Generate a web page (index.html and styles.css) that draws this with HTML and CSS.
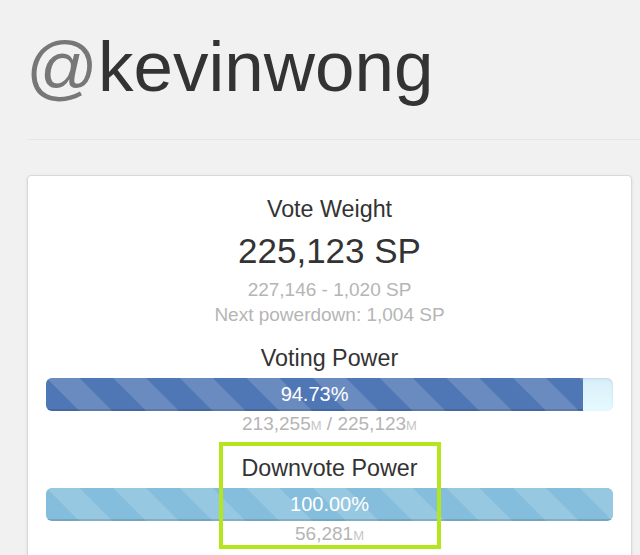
FILE: index.html
```html
<!DOCTYPE html>
<html lang="en">
<head>
<meta charset="utf-8">
<title>@kevinwong</title>
<link rel="stylesheet" href="styles.css">
</head>
<body>
<div class="page">
  <header class="page-header">
    <h1><span class="at">@</span>kevinwong</h1>
  </header>
  <section class="card">
    <div class="stat">
      <h2 class="stat-title">Vote Weight</h2>
      <div class="stat-value">225,123 SP</div>
      <div class="stat-note first">227,146 - 1,020 SP</div>
      <div class="stat-note">Next powerdown: 1,004 SP</div>
    </div>
    <div class="meter meter-voting">
      <h2 class="stat-title">Voting Power</h2>
      <div class="progress">
        <div class="progress-bar bar-voting" style="width:94.73%">94.73%</div>
      </div>
      <div class="stat-note">213,255<small>M</small> / 225,123<small>M</small></div>
    </div>
    <div class="meter meter-down">
      <h2 class="stat-title">Downvote Power</h2>
      <div class="progress">
        <div class="progress-bar bar-down" style="width:100%">100.00%</div>
      </div>
      <div class="stat-note">56,281<small>M</small></div>
    </div>
  </section>
</div>
<div class="highlight"></div>
</body>
</html>
```

FILE: styles.css
```css
html, body {
  margin: 0;
  padding: 0;
}

body {
  position: relative;
  background: #f1f1f1;
  font-family: "Liberation Sans", Arial, sans-serif;
  color: #333;
  overflow: hidden;
}

.page {
  padding-left: 27px;
}

.page-header {
  padding-top: 27px;
  padding-bottom: 33px;
  border-bottom: 1px solid #e6e6e6;
  margin-bottom: 35px;
}

.page-header h1 {
  margin: 0 0 0 -1px;
  font-size: 71px;
  line-height: 79px;
  font-weight: normal;
  color: #333;
  white-space: nowrap;
}

.page-header .at {
  color: #777;
}

.card {
  margin-right: 8px;
  background: #fff;
  border: 1px solid #d9d9d9;
  border-radius: 4px;
  box-shadow: 0 1px 3px rgba(0, 0, 0, 0.1);
  padding: 17px 18px 20px;
  text-align: center;
}

.stat-title {
  margin: 0;
  font-size: 23.3px;
  line-height: 33px;
  font-weight: normal;
  color: #333;
}

.stat-value {
  margin-top: 6px;
  font-size: 35px;
  line-height: 38px;
  color: #333;
}

.stat-note {
  font-size: 19px;
  line-height: 25px;
  color: #b5b5b5;
}

.stat-note.first {
  margin-top: 7px;
}

.stat-note small {
  font-size: 13px;
  color: #c6c6c6;
}

.meter-voting {
  margin-top: 15px;
}

.meter-down {
  margin-top: 14px;
}

.progress {
  margin-top: 3px;
  height: 33px;
  border-radius: 6px;
  overflow: hidden;
  background: linear-gradient(#d8eef9, #e6fbff);
  box-shadow: inset 0 1px 3px rgba(0, 0, 0, 0.1);
}

.progress-bar {
  height: 100%;
  color: #fff;
  font-size: 20px;
  line-height: 33px;
  text-align: center;
  white-space: nowrap;
  background-image: linear-gradient(45deg,
    rgba(255, 255, 255, 0.15) 25%, transparent 25%,
    transparent 50%, rgba(255, 255, 255, 0.15) 50%,
    rgba(255, 255, 255, 0.15) 75%, transparent 75%, transparent);
  background-size: 66.67px 66.67px;
  box-shadow: inset 0 -2px 0 rgba(0, 0, 0, 0.13);
}

.bar-voting {
  background-color: #5077b5;
}

.bar-down {
  background-color: #85bedc;
}

.highlight {
  position: absolute;
  left: 219px;
  top: 442px;
  width: 222px;
  height: 107px;
  box-sizing: border-box;
  border: 4px solid #b5e61d;
}
```
